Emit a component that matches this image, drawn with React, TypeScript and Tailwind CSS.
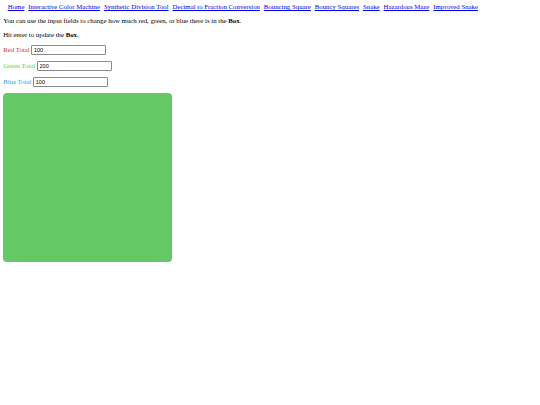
import React from "react";

const links = [
  "Home",
  "Interactive Color Machine",
  "Synthetic Division Tool",
  "Decimal to Fraction Conversion",
  "Bouncing Square",
  "Bouncy Squares",
  "Snake",
  "Hazardous Maze",
  "Improved Snake",
];

function Row({ label, color, value }: { label: string; color: string; value: string }) {
  return (
    <div className="mt-[6.4px] flex h-[9.6px] items-center">
      <span className={color}>{label}</span>
      <input
        readOnly
        value={value}
        className="ml-[1.8px] h-[9.6px] w-[75px] rounded-[1px] border border-[#8a8a8a] bg-white px-[1.5px] text-[5.5px] text-black outline-none [font-family:'Liberation_Sans',Arial,sans-serif]"
      />
    </div>
  );
}

export default function App() {
  return (
    <div className="min-h-[405px] w-[540px] bg-white px-[3.2px] pt-[3.2px] text-[6.8px] leading-[7.6px] text-black [font-family:'Liberation_Serif','Times_New_Roman',serif]">
      <nav className="flex gap-[3.9px] pl-[4.6px]">
        {links.map((l) => (
          <a key={l} href="#" className="text-[#0000ee] underline">
            {l}
          </a>
        ))}
      </nav>
      <p className="mt-[6.4px]">
        You can use the input fields to change how much red, green, or blue there is in the <b>Box</b>.
      </p>
      <p className="mt-[6.4px]">
        Hit enter to update the <b>Box</b>.
      </p>
      <Row label="Red Total" color="text-[#e02a2a]" value="100" />
      <Row label="Green Total" color="text-[#3fdc3f]" value="200" />
      <Row label="Blue Total" color="text-[#2aa6ec]" value="100" />
      <div className="mt-[6.6px] h-[169px] w-[169px] rounded-[4px] bg-[#64c864]" />
    </div>
  );
}
